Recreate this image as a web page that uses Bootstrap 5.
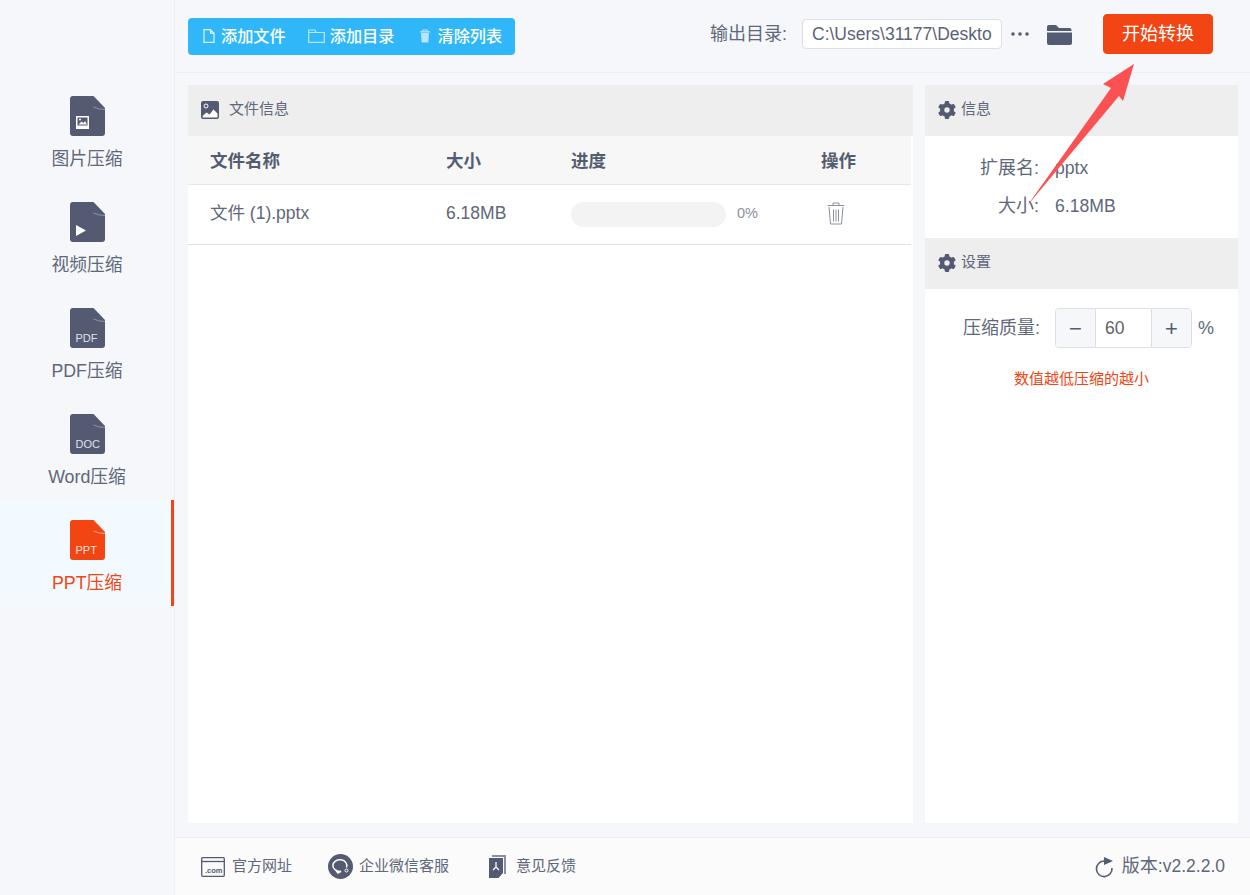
<!DOCTYPE html>
<html lang="zh-CN">
<head>
  <meta charset="UTF-8">
  <title>PPT压缩</title>
  <link rel="stylesheet" href="https://cdn.jsdelivr.net/npm/bootstrap@5.3.3/dist/css/bootstrap.min.css">
  <style>
    html, body { height: 100%; overflow: hidden; }
    body { background: #f5f7fa; color: #545c72; font-family: "Liberation Sans", "Noto Sans CJK SC", sans-serif; font-size: 16px; }
    .app-shell { width: 1250px; height: 895px; position: relative; }
    .side-bar { width: 175px; padding-top: 76px; border-right: 1px solid #edeff2; flex: none; }
    .side-item { height: 106px; padding-top: 20px; font-size: 17.8px; line-height: 24px; color: #606779; }
    .side-item svg { display: block; margin-bottom: 11px; }
    .side-item.active-item { background: #f2faff; color: #f24513; box-shadow: inset -3px 0 0 #f0451a; }
    .top-bar { height: 73px; border-bottom: 1px solid #edeff2; padding: 0 37px 0 13px; flex: none; }
    .tool-group { height: 37px; width: 327px; background: #2fb7fa; border-radius: 4px; color: #fff; font-size: 16.2px; font-weight: 500; padding-left: 15px; }
    .tool-add { gap: 6px; margin-right: 22px; }
    .tool-dir { gap: 5px; margin-right: 24px; }
    .tool-clear { gap: 7px; }
    .out-side { padding-bottom: 4px; }
    .out-label { font-size: 18px; color: #606779; margin-right: 15px; }
    .out-path { width: 200px; height: 30px; background: #fff; border: 1px solid #dcdfe6; border-radius: 4px; font-size: 17.5px; line-height: 28px; padding-left: 9px; overflow: hidden; white-space: nowrap; color: #5c6377; }
    .dir-folder { margin-left: 17px; margin-right: 31px; }
    .start-btn { width: 110px; height: 40px; background: #f24513; border-color: #f24513; color: #fff; font-size: 18px; border-radius: 4px; padding: 0; }
    .content-row { flex: 1; padding: 12px 12px 14px 13px; gap: 12px; min-height: 0; }
    .panel-box { background: #fff; }
    .panel-left { width: 725px; }
    .panel-right { width: 313px; }
    .panel-head { height: 51px; background: #eeeeee; font-size: 15px; color: #60677a; padding: 0 0 2px 13px; gap: 10px; }
    .panel-head.right-head { gap: 5px; }
    .file-table { width: 723px; table-layout: fixed; margin: 0; --bs-table-bg: transparent; --bs-table-color: #545c72; }
    .file-table th { height: 48px; background: #f7f7f7; font-size: 17.5px; font-weight: 700; color: #545c72; padding: 2px 0 0 22px; vertical-align: middle; border-bottom: 1px solid #e8e8e8; }
    .file-table td { height: 60px; font-size: 17.5px; color: #606779; padding: 0 0 2px 22px; vertical-align: middle; border-bottom: 1px solid #e0e0e0; }
    .file-table td.bar-cell { padding-bottom: 0; }
    .bar-track { width: 155px; height: 25px; border-radius: 13px; background: #f3f3f3; }
    .bar-text { font-size: 14.500px; color: #8a90a0; margin-left: 11px; }
    .bin-icon { display: block; margin-left: 6px; }
    .info-line { font-size: 17.6px; color: #606779; height: 38px; }
    .info-key { width: 114px; text-align: right; margin-right: 16px; flex: none; font-size: 18px; }
    .info-wrap { height: 102px; padding-top: 13px; }
    .set-wrap { padding-top: 19px; }
    .qty-label { width: 115px; text-align: right; margin-right: 15px; font-size: 18px; color: #606779; flex: none; }
    .qty-box { width: 137px; height: 40px; border: 1px solid #dcdfe6; border-radius: 4px; overflow: hidden; }
    .qty-btn { width: 39px; background: #f5f7fa; font-size: 22px; color: #545c72; flex: none; }
    .qty-val { flex: 1; border-left: 1px solid #dcdfe6; border-right: 1px solid #dcdfe6; font-size: 17.5px; color: #606266; padding-left: 9px; }
    .qty-unit { font-size: 18px; color: #606779; margin-left: 6px; }
    .hint-text { font-size: 15px; color: #f24513; text-align: center; margin-top: 20px; }
    .foot-bar { height: 58px; background: #fbfbfc; border-top: 1px solid #edeff2; padding: 0 25px 0 26px; flex: none; font-size: 15px; color: #606779; }
    .foot-site { gap: 7px; margin-right: 36px; }
    .foot-chat { gap: 6px; margin-right: 39px; }
    .foot-back { gap: 9px; }
    .ver-text { font-size: 17.5px; color: #606779; gap: 8px; }
    .ver-key { font-size: 18px; }
    .arrow-over { position: absolute; left: 1020px; top: 55px; pointer-events: none; }
  </style>
</head>
<body>
<div class="app-shell d-flex">
  <div class="side-bar">
    <div class="side-item d-flex flex-column align-items-center">
      <svg width="35" height="40" viewBox="0 0 35 40"><path d="M3 0H23.500L35 12V37a3 3 0 0 1-3 3H3a3 3 0 0 1-3-3V3a3 3 0 0 1 3-3z" fill="#535a72"/><path d="M23.500 11q5 2.500 11.500 2.500" fill="none" stroke="#8e95a8" stroke-width="1"/><rect x="6" y="20" width="13" height="13" fill="#fff"/><rect x="7.500" y="21.500" width="10" height="8" fill="#535a72"/><path d="M8.500 28.500l3-3 2 1.500 1.500-2 2 3.500z" fill="#fff"/><circle cx="10" cy="23.500" r="1" fill="#fff"/></svg>
      <span>图片压缩</span>
    </div>
    <div class="side-item d-flex flex-column align-items-center">
      <svg width="35" height="40" viewBox="0 0 35 40"><path d="M3 0H23.500L35 12V37a3 3 0 0 1-3 3H3a3 3 0 0 1-3-3V3a3 3 0 0 1 3-3z" fill="#535a72"/><path d="M23.500 11q5 2.500 11.500 2.500" fill="none" stroke="#8e95a8" stroke-width="1"/><path d="M6 23l10 5.500L6 34z" fill="#fff"/></svg>
      <span>视频压缩</span>
    </div>
    <div class="side-item d-flex flex-column align-items-center">
      <svg width="35" height="40" viewBox="0 0 35 40"><path d="M3 0H23.500L35 12V37a3 3 0 0 1-3 3H3a3 3 0 0 1-3-3V3a3 3 0 0 1 3-3z" fill="#535a72"/><path d="M23.500 11q5 2.500 11.500 2.500" fill="none" stroke="#8e95a8" stroke-width="1"/><text x="5.500" y="34" font-size="11" fill="#dfe1e7" font-family="Liberation Sans">PDF</text></svg>
      <span>PDF压缩</span>
    </div>
    <div class="side-item d-flex flex-column align-items-center">
      <svg width="35" height="40" viewBox="0 0 35 40"><path d="M3 0H23.500L35 12V37a3 3 0 0 1-3 3H3a3 3 0 0 1-3-3V3a3 3 0 0 1 3-3z" fill="#535a72"/><path d="M23.500 11q5 2.500 11.500 2.500" fill="none" stroke="#8e95a8" stroke-width="1"/><text x="5.500" y="34" font-size="11" fill="#dfe1e7" font-family="Liberation Sans">DOC</text></svg>
      <span>Word压缩</span>
    </div>
    <div class="side-item active-item d-flex flex-column align-items-center">
      <svg width="35" height="40" viewBox="0 0 35 40"><path d="M3 0H23.500L35 12V37a3 3 0 0 1-3 3H3a3 3 0 0 1-3-3V3a3 3 0 0 1 3-3z" fill="#f24513"/><path d="M23.500 11q5 2.500 11.500 2.500" fill="none" stroke="#f9a58c" stroke-width="1"/><text x="5.500" y="34" font-size="11" fill="#fde3da" font-family="Liberation Sans">PPT</text></svg>
      <span>PPT压缩</span>
    </div>
  </div>

  <div class="flex-grow-1 d-flex flex-column">
    <div class="top-bar d-flex align-items-center">
      <div class="tool-group d-flex align-items-center">
        <div class="tool-add d-flex align-items-center">
          <svg width="12" height="14" viewBox="0 0 12 14"><path d="M1 .7H7.500L11 4.200V13.300H1zM7.500 .7V4.200H11" fill="none" stroke="#e3f5ff" stroke-width="1.200"/></svg>
          <span>添加文件</span>
        </div>
        <div class="tool-dir d-flex align-items-center">
          <svg width="17" height="14" viewBox="0 0 17 14"><path d="M.7 3.500V1H7L8 3.500H16.300V13.300H.7zM.7 3.500H8" fill="none" stroke="#b9e6fd" stroke-width="1.200"/></svg>
          <span>添加目录</span>
        </div>
        <div class="tool-clear d-flex align-items-center">
          <svg width="12" height="14" viewBox="0 0 12 14"><path d="M2 4H10L9.300 13.500H2.700z" fill="#b9e6fd"/><path d="M1 2.800H11M4 2.500V1H8V2.500" fill="none" stroke="#b9e6fd" stroke-width="1.200"/></svg>
          <span>清除列表</span>
        </div>
      </div>
      <div class="out-side ms-auto d-flex align-items-center">
        <span class="out-label">输出目录:</span>
        <div class="out-path">C:\Users\31177\Deskto</div>
        <svg class="ms-2" width="20" height="6" viewBox="0 0 20 6"><circle cx="3" cy="3" r="1.800" fill="#545c72"/><circle cx="10" cy="3" r="1.800" fill="#545c72"/><circle cx="17" cy="3" r="1.800" fill="#545c72"/></svg>
        <svg class="dir-folder" width="25" height="21" viewBox="0 0 25 21"><path d="M0 3a2 2 0 0 1 2-2h7l3 3h10.500a2 2 0 0 1 2 2v1H0z" fill="#545c72"/><path d="M0 8.500H25V19a2 2 0 0 1-2 2H2a2 2 0 0 1-2-2z" fill="#545c72"/></svg>
        <button type="button" class="btn start-btn">开始转换</button>
      </div>
    </div>

    <div class="content-row d-flex">
      <div class="panel-box panel-left">
        <div class="panel-head d-flex align-items-center">
          <svg width="18" height="18" viewBox="0 0 18 18"><rect width="18" height="18" rx="2" fill="#535a72"/><circle cx="5" cy="5" r="2" fill="none" stroke="#fff" stroke-width="1"/><path d="M1.500 15l4-3.500 3 2 4-5 4 4v3.500a.5.5 0 0 1-.5.5H2z" fill="#fff"/></svg>
          <span>文件信息</span>
        </div>
        <table class="table file-table">
          <colgroup><col style="width:236px"><col style="width:125px"><col style="width:250px"><col></colgroup>
          <thead>
            <tr><th>文件名称</th><th>大小</th><th>进度</th><th>操作</th></tr>
          </thead>
          <tbody>
            <tr>
              <td>文件 (1).pptx</td>
              <td>6.18MB</td>
              <td class="bar-cell"><div class="d-flex align-items-center"><div class="bar-track"></div><span class="bar-text">0%</span></div></td>
              <td>
                <svg class="bin-icon" width="18" height="23" viewBox="0 0 18 23"><path d="M2 5L3.500 22H14.500L16 5M.5 3.500H17.500M6 3.500V1H12V3.500M6.500 7.500V19.500M9 7.500V19.500M11.500 7.500V19.500" fill="none" stroke="#8a90a0" stroke-width="1"/></svg>
              </td>
            </tr>
          </tbody>
        </table>
      </div>

      <div class="panel-box panel-right">
        <div class="panel-head right-head d-flex align-items-center">
          <svg width="18" height="18" viewBox="0 0 18 18"><g fill="#535a72"><circle cx="9" cy="9" r="7"/><rect x="6.800" y="0" width="4.400" height="18" rx="1"/><rect x="6.800" y="0" width="4.400" height="18" rx="1" transform="rotate(60 9 9)"/><rect x="6.800" y="0" width="4.400" height="18" rx="1" transform="rotate(120 9 9)"/></g><circle cx="9" cy="9" r="2.700" fill="#eee"/></svg>
          <span>信息</span>
        </div>
        <div class="info-wrap">
          <div class="info-line d-flex align-items-center"><span class="info-key">扩展名:</span><span>pptx</span></div>
          <div class="info-line d-flex align-items-center"><span class="info-key">大小:</span><span>6.18MB</span></div>
        </div>
        <div class="panel-head right-head d-flex align-items-center">
          <svg width="18" height="18" viewBox="0 0 18 18"><g fill="#535a72"><circle cx="9" cy="9" r="7"/><rect x="6.800" y="0" width="4.400" height="18" rx="1"/><rect x="6.800" y="0" width="4.400" height="18" rx="1" transform="rotate(60 9 9)"/><rect x="6.800" y="0" width="4.400" height="18" rx="1" transform="rotate(120 9 9)"/></g><circle cx="9" cy="9" r="2.700" fill="#eee"/></svg>
          <span>设置</span>
        </div>
        <div class="set-wrap">
          <div class="d-flex align-items-center">
            <span class="qty-label">压缩质量:</span>
            <div class="qty-box d-flex">
              <div class="qty-btn d-flex align-items-center justify-content-center">−</div>
              <div class="qty-val d-flex align-items-center">60</div>
              <div class="qty-btn d-flex align-items-center justify-content-center">+</div>
            </div>
            <span class="qty-unit">%</span>
          </div>
          <div class="hint-text">数值越低压缩的越小</div>
        </div>
      </div>
    </div>

    <div class="foot-bar d-flex align-items-center">
      <div class="foot-site d-flex align-items-center">
        <svg width="24" height="20" viewBox="0 0 24 20"><rect x=".7" y=".7" width="22.600" height="18.600" rx="1" fill="none" stroke="#535a72" stroke-width="1.300"/><path d="M.7 4.500H23.300" stroke="#535a72" stroke-width="1.300"/><text x="4" y="15.500" font-size="7.500" font-weight="700" fill="#535a72" font-family="Liberation Sans">.com</text></svg>
        <span>官方网址</span>
      </div>
      <div class="foot-chat d-flex align-items-center">
        <svg width="25" height="25" viewBox="0 0 25 25"><circle cx="12.500" cy="12.500" r="12.500" fill="#535a72"/><path d="M18.500 13.500A7 5.800 0 1 0 13 17.300L10 19 8 16.500" fill="none" stroke="#fff" stroke-width="1.500"/><circle cx="18.500" cy="16.500" r="1.500" fill="none" stroke="#fff" stroke-width="1"/></svg>
        <span>企业微信客服</span>
      </div>
      <div class="foot-back d-flex align-items-center">
        <svg width="19" height="24" viewBox="0 0 19 24"><path d="M4 0H18V19H16V2H4z" fill="#8a90a0"/><path d="M1 3H15V18L10.500 23H1z" fill="#535a72"/><path d="M8 7v5M8 12l-3 3M8 12l3 3" stroke="#fff" stroke-width="1.300" fill="none"/></svg>
        <span>意见反馈</span>
      </div>
      <div class="ms-auto d-flex align-items-center ver-text">
        <svg width="20" height="22" viewBox="0 0 20 22"><path d="M10.500 5A7.800 7.800 0 1 0 18 12" fill="none" stroke="#545c72" stroke-width="1.600"/><path d="M10 1L19 5 10 9z" fill="#545c72"/></svg>
        <span><span class="ver-key">版本:</span>v2.2.2.0</span>
      </div>
    </div>
  </div>

  <svg class="arrow-over" width="125" height="160" viewBox="0 0 125 160"><path d="M7 151L91 33 83 29 114 9 103 46 99 41z" fill="#fc5153"/></svg>
</div>
<script src="https://cdn.jsdelivr.net/npm/bootstrap@5.3.3/dist/js/bootstrap.bundle.min.js"></script>
</body>
</html>
